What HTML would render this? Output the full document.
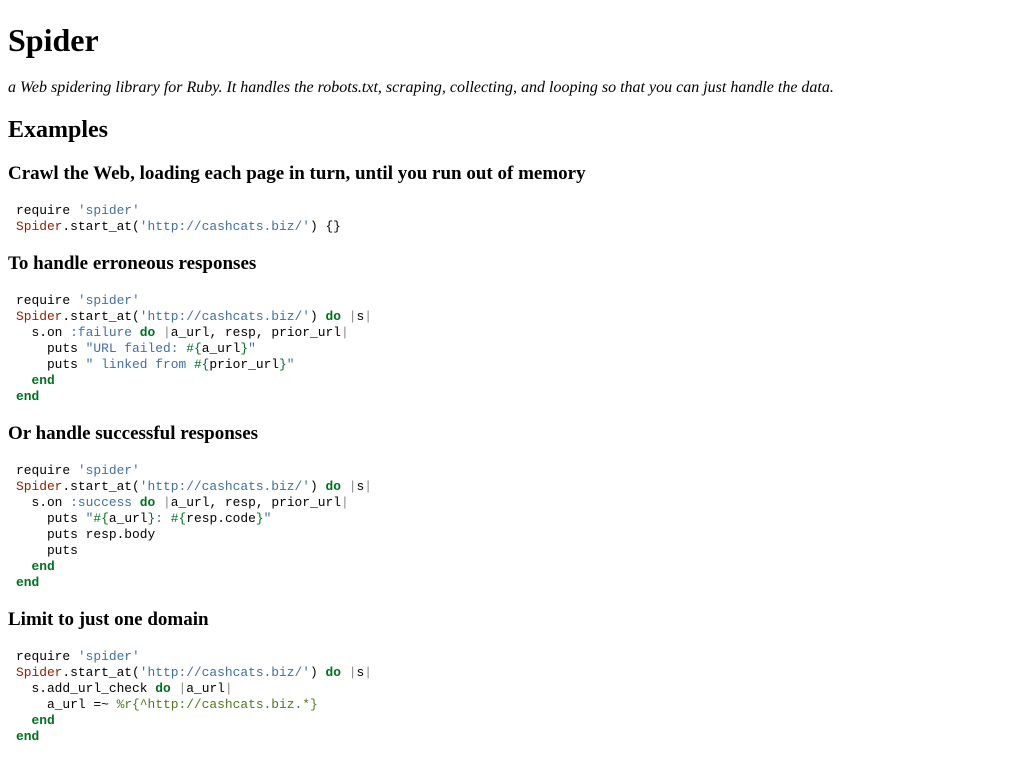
<!DOCTYPE html><html><head><style>
body{margin:0;background:#fff;font-family:"Liberation Serif",serif;color:#000}
.a{position:absolute;left:8px;margin:0;white-space:nowrap}
h1{font-size:32px;font-weight:bold}
.t{font-size:16px;font-style:italic}
h2{font-size:24px;font-weight:bold}
h3{font-size:19px;font-weight:bold}
pre{position:absolute;left:16px;margin:0;font-family:"Liberation Mono",monospace;font-size:12.9px;line-height:16px}
.s{color:#4070a0}.c{color:#902000}.k{color:#007020;font-weight:bold}.y{color:#517918}.g{color:#888}.i{color:#70a0d0}
</style></head><body>
<div class="a" style="top:20px"><h1 style="margin:0;line-height:40px">Spider</h1></div>
<div class="a t" style="top:79px;line-height:18px">a Web spidering library for Ruby. It handles the robots.txt, scraping, collecting, and looping so that you can just handle the data.</div>
<h2 class="a" style="top:116px;line-height:28px">Examples</h2>
<h3 class="a" style="top:162px;line-height:24px">Crawl the Web, loading each page in turn, until you run out of memory</h3>
<pre style="top:203px">require <span class="s">'spider'</span>
<span class="c">Spider</span>.start_at(<span class="s">'http://cashcats.biz/'</span>) {}</pre>
<h3 class="a" style="top:252px;line-height:24px">To handle erroneous responses</h3>
<pre style="top:293px">require <span class="s">'spider'</span>
<span class="c">Spider</span>.start_at(<span class="s">'http://cashcats.biz/'</span>) <span class="k">do</span> <span class="g">|</span>s<span class="g">|</span>
  s.on <span class="s">:failure</span> <span class="k">do</span> <span class="g">|</span>a_url, resp, prior_url<span class="g">|</span>
    puts <span class="s">"URL failed: </span><span class="k" style="font-weight:normal">#{</span>a_url<span class="k" style="font-weight:normal">}</span><span class="s">"</span>
    puts <span class="s">" linked from </span><span class="k" style="font-weight:normal">#{</span>prior_url<span class="k" style="font-weight:normal">}</span><span class="s">"</span>
  <span class="k">end</span>
<span class="k">end</span></pre>
<h3 class="a" style="top:422px;line-height:24px">Or handle successful responses</h3>
<pre style="top:463px">require <span class="s">'spider'</span>
<span class="c">Spider</span>.start_at(<span class="s">'http://cashcats.biz/'</span>) <span class="k">do</span> <span class="g">|</span>s<span class="g">|</span>
  s.on <span class="s">:success</span> <span class="k">do</span> <span class="g">|</span>a_url, resp, prior_url<span class="g">|</span>
    puts <span class="s">"</span><span class="k" style="font-weight:normal">#{</span>a_url<span class="k" style="font-weight:normal">}</span><span class="s">: </span><span class="k" style="font-weight:normal">#{</span>resp.code<span class="k" style="font-weight:normal">}</span><span class="s">"</span>
    puts resp.body
    puts
  <span class="k">end</span>
<span class="k">end</span></pre>
<h3 class="a" style="top:608px;line-height:24px">Limit to just one domain</h3>
<pre style="top:649px">require <span class="s">'spider'</span>
<span class="c">Spider</span>.start_at(<span class="s">'http://cashcats.biz/'</span>) <span class="k">do</span> <span class="g">|</span>s<span class="g">|</span>
  s.add_url_check <span class="k">do</span> <span class="g">|</span>a_url<span class="g">|</span>
    a_url =~ <span class="y">%r{^http://cashcats.biz.*}</span>
  <span class="k">end</span>
<span class="k">end</span></pre>
</body></html>
